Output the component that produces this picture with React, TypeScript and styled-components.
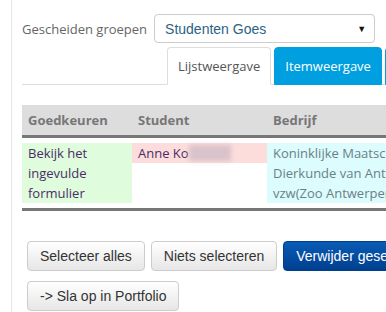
import styled, { createGlobalStyle } from "styled-components";

const GlobalStyle = createGlobalStyle`
  html, body {
    margin: 0;
    padding: 0;
    background: #ffffff;
    overflow: hidden;
  }
  body {
    font-family: "Open Sans", "Liberation Sans", sans-serif;
    font-size: 13px;
    color: #555555;
  }
`;

const Page = styled.div`
  margin-left: 11px;
  border-left: 1px solid #e6e6e6;
  padding-left: 10px;
  min-height: 312px;
  width: 560px;
`;

const GroupRow = styled.div`
  display: flex;
  align-items: center;
  gap: 7px;
  padding-top: 14px;
`;

const Label = styled.label`
  color: #666666;
  font-size: 13px;
`;

const Select = styled.div`
  box-sizing: border-box;
  width: 221px;
  height: 29px;
  border: 1px solid #cccccc;
  border-radius: 4px;
  display: flex;
  align-items: center;
  justify-content: space-between;
  padding: 0 8px 0 10px;
  font-family: "Liberation Sans", Arial, sans-serif;
  font-size: 14px;
  color: #2b6383;
`;

const Caret = styled.span`
  font-size: 9px;
  color: #111111;
`;

const TabBar = styled.div`
  display: flex;
  margin-top: 4px;
  padding-left: 145px;
  border-bottom: 1px solid #dddddd;
  height: 37px;
`;

const Tab = styled.div<{ $active?: boolean }>`
  box-sizing: border-box;
  height: 38px;
  padding: 0 10px;
  margin-right: 3px;
  display: flex;
  align-items: center;
  border-radius: 4px 4px 0 0;
  border: 1px solid ${(p) => (p.$active ? "#dddddd" : "#009fe0")};
  border-bottom-color: ${(p) => (p.$active ? "#ffffff" : "#009fe0")};
  background: ${(p) => (p.$active ? "#ffffff" : "#009fe0")};
  color: ${(p) => (p.$active ? "#555555" : "#ffffff")};
  white-space: nowrap;
`;

const Table = styled.div`
  margin-top: 20px;
  width: 520px;
  border-bottom: 3px solid #777777;
`;

const HeadRow = styled.div`
  display: grid;
  grid-template-columns: 110px 135px 1fr;
  height: 30px;
  align-items: center;
  background: #dddddd;
  border-bottom: 3px solid #777777;
`;

const HeadCell = styled.div`
  padding-left: 6px;
  font-weight: 700;
  color: #777777;
`;

const BodyRow = styled.div`
  display: grid;
  grid-template-columns: 110px 135px 1fr;
  align-items: start;
  padding: 5px 0;
`;

const Cell = styled.div<{ $bg: string; $color?: string }>`
  background: ${(p) => p.$bg};
  color: ${(p) => p.$color || "#4a2d68"};
  padding-left: 6px;
  line-height: 20px;
  white-space: pre-line;
`;

const Blurred = styled.span`
  display: inline-block;
  width: 42px;
  height: 16px;
  vertical-align: -3px;
  background: #d9c3ca;
  filter: blur(2px);
`;

const Buttons = styled.div`
  display: flex;
  flex-direction: column;
  gap: 10px;
  margin-top: 30px;
  padding-left: 5px;
`;

const ButtonRow = styled.div`
  display: flex;
  gap: 6px;
`;

const Button = styled.button<{ $primary?: boolean }>`
  box-sizing: border-box;
  height: 30px;
  padding: 0 12px;
  border-radius: 4px;
  font-family: "Liberation Sans", Arial, sans-serif;
  font-size: 14px;
  white-space: nowrap;
  border: 1px solid ${(p) => (p.$primary ? "#003f8a" : "#cccccc")};
  color: ${(p) => (p.$primary ? "#ffffff" : "#333333")};
  background: ${(p) =>
    p.$primary
      ? "linear-gradient(#0a5bb5, #003f8f)"
      : "linear-gradient(#ffffff, #e6e6e6)"};
`;

export default function App() {
  return (
    <>
      <GlobalStyle />
      <Page>
        <GroupRow>
          <Label>Gescheiden groepen</Label>
          <Select>
            Studenten Goes
            <Caret>▼</Caret>
          </Select>
        </GroupRow>
        <TabBar>
          <Tab $active>Lijstweergave</Tab>
          <Tab>Itemweergave</Tab>
          <Tab>Exporteren</Tab>
        </TabBar>
        <Table>
          <HeadRow>
            <HeadCell>Goedkeuren</HeadCell>
            <HeadCell>Student</HeadCell>
            <HeadCell>Bedrijf</HeadCell>
          </HeadRow>
          <BodyRow>
            <Cell $bg="#dffcdc">{"Bekijk het\ningevulde\nformulier"}</Cell>
            <Cell $bg="#fddcdc">
              Anne Ko<Blurred />
            </Cell>
            <Cell $bg="#dcfcfd" $color="#6b7f88">
              {"Koninklijke Maatschappij voor\nDierkunde van Antwerpen\nvzw(Zoo Antwerpen)"}
            </Cell>
          </BodyRow>
        </Table>
        <Buttons>
          <ButtonRow>
            <Button>Selecteer alles</Button>
            <Button>Niets selecteren</Button>
            <Button $primary>Verwijder geselecteerde</Button>
          </ButtonRow>
          <ButtonRow>
            <Button>-&gt; Sla op in Portfolio</Button>
          </ButtonRow>
        </Buttons>
      </Page>
    </>
  );
}
